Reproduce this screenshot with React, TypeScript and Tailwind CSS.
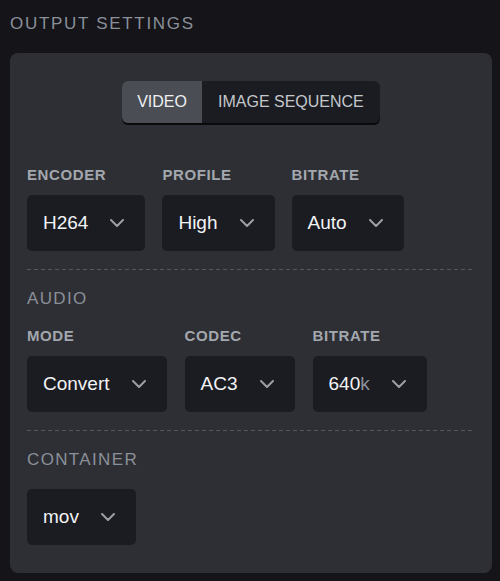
import React from "react";

const Chevron = () => (
  <svg width="14" height="8" viewBox="0 0 14 8" fill="none" className="shrink-0">
    <polyline points="1,1 7,7 13,1" stroke="#9b9ea5" strokeWidth="2" strokeLinecap="round" strokeLinejoin="round" />
  </svg>
);

const Select = ({ value, suffix }: { value: string; suffix?: string }) => (
  <div className="flex h-[56px] items-center gap-[22px] rounded-[5px] bg-[#1b1c22] pl-[16px] pr-[21px]">
    <span className="text-[19px] text-[#f2f3f5]">
      {value}
      {suffix && <span className="text-[#8d9198]">{suffix}</span>}
    </span>
    <Chevron />
  </div>
);

const Field = ({ label, value, suffix }: { label: string; value: string; suffix?: string }) => (
  <div className="flex flex-col gap-[10px]">
    <div className="text-[15px] font-bold leading-[20px] tracking-[0.6px] text-[#a3a7ae]">{label}</div>
    <Select value={value} suffix={suffix} />
  </div>
);

const Dashed = () => (
  <div className="h-px w-full bg-[repeating-linear-gradient(90deg,#55585e_0_4px,transparent_4px_7px)]" />
);

export default function App() {
  return (
    <div className="min-h-[581px] bg-[#141419] pt-[14px] font-['Liberation_Sans',Arial,sans-serif]">
      <div className="pl-[10px] text-[17px] leading-[20px] tracking-[0.1em] text-[#8a9099]">OUTPUT SETTINGS</div>
      <div className="ml-[10px] mt-[19px] w-[482px] rounded-[8px] bg-[#2e2f34] pb-[28px] pl-[17px] pr-[20px] pt-[28px]">
        <div className="flex justify-center pl-[3px]">
          <div className="flex h-[42px] overflow-hidden rounded-[6px] bg-[#1b1c21] shadow-[0_2px_0_#0a0a0c] text-[16px]">
            <div className="flex items-center bg-[#4a4d53] px-[15px] text-[#eef0f3]">VIDEO</div>
            <div className="flex items-center px-[16px] text-[#c4c7cc]">IMAGE SEQUENCE</div>
          </div>
        </div>
        <div className="mt-[42px] flex gap-[17px]">
          <Field label="ENCODER" value="H264" />
          <Field label="PROFILE" value="High" />
          <Field label="BITRATE" value="Auto" />
        </div>
        <div className="mt-[18px]">
          <Dashed />
        </div>
        <div className="mt-[19px] text-[17px] leading-[20px] tracking-[0.08em] text-[#8a9099]">AUDIO</div>
        <div className="mt-[17px] flex gap-[18px]">
          <Field label="MODE" value="Convert" />
          <Field label="CODEC" value="AC3" />
          <Field label="BITRATE" value="640" suffix="k" />
        </div>
        <div className="mt-[18px]">
          <Dashed />
        </div>
        <div className="mt-[19px] text-[17px] leading-[20px] tracking-[0.08em] text-[#8a9099]">CONTAINER</div>
        <div className="mt-[19px] flex">
          <Select value="mov" />
        </div>
      </div>
    </div>
  );
}
